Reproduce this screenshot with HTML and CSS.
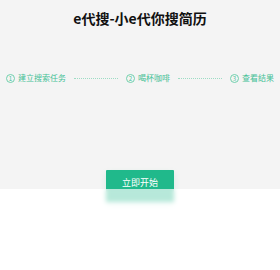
FILE: index.html
```html
<!DOCTYPE html>
<html lang="zh-CN">
  <head>
    <meta charset="UTF-8" />
    <meta name="viewport" content="width=device-width, initial-scale=1.0" />
    <title>e代搜</title>
    <link rel="stylesheet" href="styles.css">
  </head>
  <body>
    <div class="hero">
      <h1>e代搜-小e代你搜简历</h1>
      <div class="steps">
        <span class="num">1</span><span class="label">建立搜索任务</span>
        <span class="dots"></span>
        <span class="num">2</span><span class="label">喝杯咖啡</span>
        <span class="dots"></span>
        <span class="num">3</span><span class="label">查看结果</span>
      </div>
      <div class="action">
        <button class="start">立即开始</button>
      </div>
    </div>
    <div class="fade"></div>
  </body>
</html>
```

FILE: styles.css
```css
* {
  box-sizing: border-box;
}
body {
  margin: 0;
  font-family: "Noto Sans CJK SC", "Liberation Sans", sans-serif;
  background: #fff;
  height: 270px;
  overflow: hidden;
}
.hero {
  background-color: #f4f4f4;
  height: 189px;
  padding-top: 8px;
}
h1 {
  margin: 0;
  font-size: 14px;
  line-height: 20px;
  text-align: center;
  color: #111;
  font-weight: bold;
}
.steps {
  margin-top: 44px;
  display: flex;
  align-items: center;
  justify-content: center;
  height: 12px;
  color: #45c196;
  font-size: 8px;
}
.num {
  width: 9px;
  height: 9px;
  border: 1px solid #6fd0ad;
  border-radius: 50%;
  font-size: 6px;
  line-height: 7px;
  text-align: center;
  margin-right: 3px;
}
.label {
  line-height: 12px;
}
.dots {
  width: 44px;
  border-top: 1px dotted #9ddcc4;
  margin: 0 8px;
}
.action {
  margin-top: 86px;
  display: flex;
  justify-content: center;
}
.start {
  width: 68px;
  height: 32px;
  border: none;
  border-radius: 1px;
  background-color: #20b98b;
  color: #fff;
  font-family: inherit;
  font-size: 9px;
  padding: 0 0 8px;
  box-shadow: 0 3px 6px rgba(32, 185, 139, 0.15);
}
.fade {
  position: absolute;
  top: 189px;
  left: 0;
  right: 0;
  bottom: 0;
  background: rgba(255, 255, 255, 0.68);
  -webkit-backdrop-filter: blur(2px);
  backdrop-filter: blur(2px);
}
```
